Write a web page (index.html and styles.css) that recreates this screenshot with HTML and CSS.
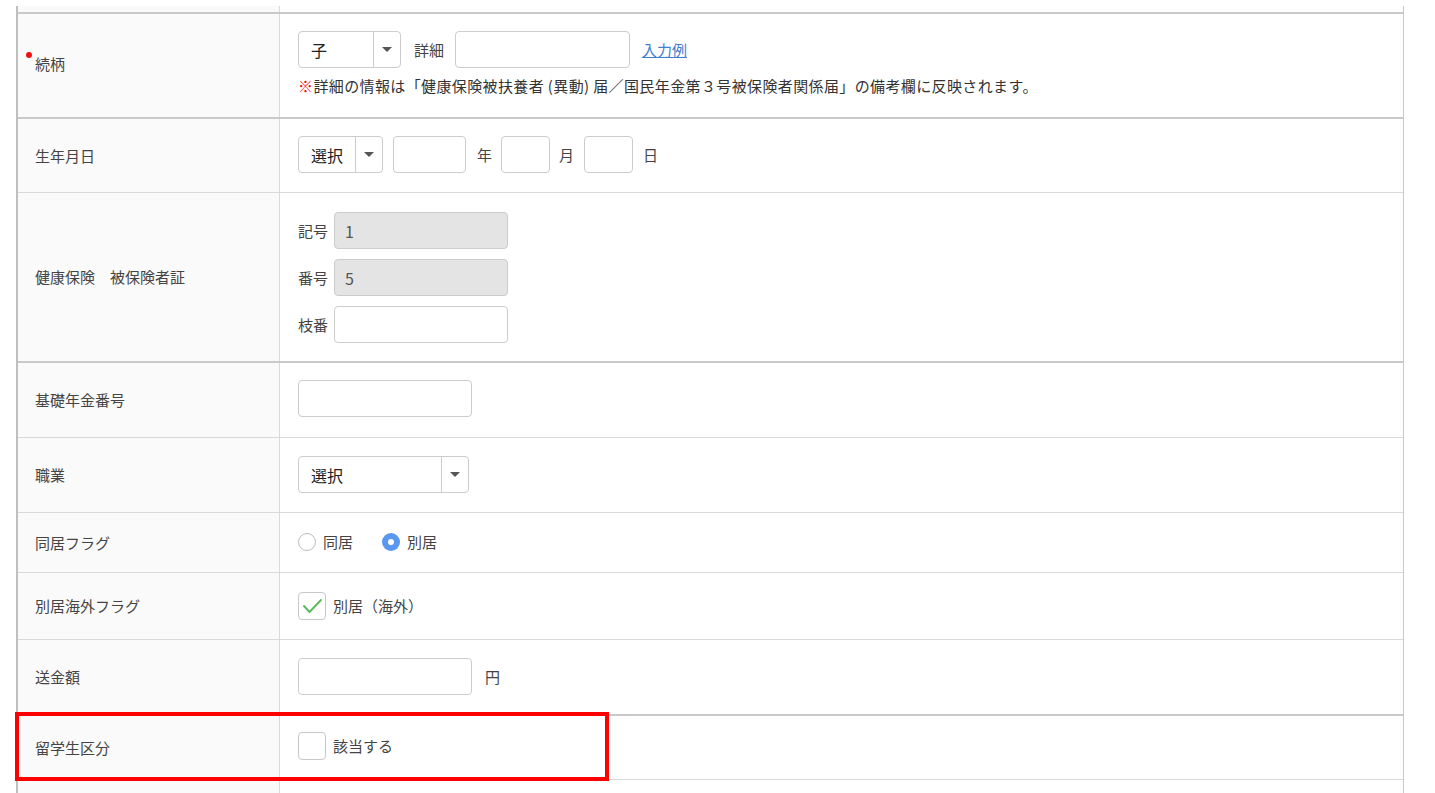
FILE: index.html
```html
<!DOCTYPE html>
<html lang="ja">
<head>
<meta charset="utf-8">
<title>扶養家族</title>
<link rel="stylesheet" href="styles.css">
</head>
<body>
<div class="sheet">
  <div class="row row-top thick">
    <div class="label"></div>
    <div class="value"></div>
  </div>

  <div class="row thick">
    <div class="label label-rel"><span class="req"></span>続柄</div>
    <div class="value v-relation">
      <div class="line">
        <div class="select w-rel"><span class="sel-text">子</span><span class="sel-btn"><span class="tri"></span></span></div>
        <span class="txt ml13">詳細</span>
        <div class="input w-detail ml11"></div>
        <a class="link ml12" href="#">入力例</a>
      </div>
      <div class="note"><span class="mark">※</span>詳細の情報は「健康保険被扶養者 (異動) 届／国民年金第３号被保険者関係届」の備考欄に反映されます。</div>
    </div>
  </div>

  <div class="row">
    <div class="label">生年月日</div>
    <div class="value v-birth">
      <div class="line">
        <div class="select w-era"><span class="sel-text">選択</span><span class="sel-btn"><span class="tri"></span></span></div>
        <div class="input w-year ml10"></div>
        <span class="txt ml11">年</span>
        <div class="input w-md ml9"></div>
        <span class="txt ml9">月</span>
        <div class="input w-md ml10"></div>
        <span class="txt ml10">日</span>
      </div>
    </div>
  </div>

  <div class="row thick">
    <div class="label">健康保険　被保険者証</div>
    <div class="value v-ins">
      <div class="stack">
        <div class="line"><span class="txt">記号</span><div class="input disabled w-ins ml6">1</div></div>
        <div class="line"><span class="txt">番号</span><div class="input disabled w-ins ml6">5</div></div>
        <div class="line"><span class="txt">枝番</span><div class="input w-ins ml6"></div></div>
      </div>
    </div>
  </div>

  <div class="row">
    <div class="label">基礎年金番号</div>
    <div class="value v-pension">
      <div class="input w-std"></div>
    </div>
  </div>

  <div class="row">
    <div class="label">職業</div>
    <div class="value v-job">
      <div class="select w-job"><span class="sel-text">選択</span><span class="sel-btn wide"><span class="tri"></span></span></div>
    </div>
  </div>

  <div class="row">
    <div class="label">同居フラグ</div>
    <div class="value v-cohabit">
      <div class="line">
        <span class="radio"></span><span class="txt ml7">同居</span>
        <span class="radio on ml29"></span><span class="txt ml7">別居</span>
      </div>
    </div>
  </div>

  <div class="row">
    <div class="label">別居海外フラグ</div>
    <div class="value v-abroad">
      <div class="line">
        <span class="check"><svg width="22" height="18" viewBox="0 0 22 18"><path d="M3 9 L8.5 15 L20 3" fill="none" stroke="#5cb85c" stroke-width="1.9" stroke-linecap="round" stroke-linejoin="round"/></svg></span>
        <span class="txt ml7">別居（海外）</span>
      </div>
    </div>
  </div>

  <div class="row thick">
    <div class="label">送金額</div>
    <div class="value v-remit">
      <div class="line">
        <div class="input w-std"></div>
        <span class="txt ml13">円</span>
      </div>
    </div>
  </div>

  <div class="row row-student">
    <div class="highlight"></div>
    <div class="label">留学生区分</div>
    <div class="value v-student">
      <div class="line">
        <span class="check"></span>
        <span class="txt ml7">該当する</span>
      </div>
    </div>
  </div>

  <div class="row row-last">
    <div class="label"></div>
    <div class="value"></div>
  </div>
</div>
</body>
</html>
```

FILE: styles.css
```css
html, body {
  margin: 0;
  padding: 0;
  background: #ffffff;
  font-family: "Noto Sans CJK JP", "Noto Sans", "Liberation Sans", sans-serif;
  font-size: 15px;
  color: #333333;
  overflow: hidden;
}

.sheet {
  margin: 6px 0 0 16px;
  width: 1388px;
  box-sizing: border-box;
  border-left: 2px solid #bfbfbf;
  border-right: 1px solid #c8c8c8;
  position: relative;
}

.row {
  display: grid;
  grid-template-columns: 262px 1fr;
  border-bottom: 1px solid #d9d9d9;
  position: relative;
}

.row.thick {
  border-bottom: 2px solid #c9c9c9;
}

.row-top {
  height: 6px;
}

.row-last {
  height: 30px;
}

.label {
  background: #fafafa;
  border-right: 1px solid #dadada;
  padding-left: 17px;
  display: flex;
  align-items: center;
  color: #444444;
  font-size: 15px;
  line-height: 20px;
  position: relative;
}

.label-rel {
  padding-bottom: 4px;
}

.req {
  position: absolute;
  left: 8px;
  top: 50%;
  margin-top: -14px;
  width: 6px;
  height: 6px;
  border-radius: 50%;
  background: #ee1111;
}

.value {
  padding: 0 18px;
  display: flex;
  flex-direction: column;
  justify-content: center;
  background: #ffffff;
}

.v-relation { padding-top: 17px; padding-bottom: 21px; }
.v-birth { padding-top: 17px; padding-bottom: 19px; }
.v-ins { padding-top: 19px; padding-bottom: 18px; }
.v-pension { padding-top: 17px; padding-bottom: 20px; }
.v-job { padding-top: 18px; padding-bottom: 19px; }
.v-cohabit { padding-top: 19px; padding-bottom: 20px; }
.v-abroad { padding-top: 19px; padding-bottom: 19px; }
.v-remit { padding-top: 18px; padding-bottom: 19px; }
.v-student { padding-top: 16px; padding-bottom: 19px; }

.line {
  display: flex;
  align-items: center;
}

.stack {
  display: flex;
  flex-direction: column;
  gap: 10px;
}

.txt {
  color: #444444;
  line-height: 20px;
  white-space: nowrap;
}

.ml6 { margin-left: 6px; }
.ml7 { margin-left: 7px; }
.ml9 { margin-left: 9px; }
.ml10 { margin-left: 10px; }
.ml11 { margin-left: 11px; }
.ml12 { margin-left: 12px; }
.ml13 { margin-left: 13px; }
.ml29 { margin-left: 29px; }

.input {
  height: 37px;
  box-sizing: border-box;
  border: 1px solid #cccccc;
  border-radius: 4px;
  background: #ffffff;
  display: flex;
  align-items: center;
  padding-left: 10px;
  color: #555555;
  font-size: 16px;
}

.input.disabled {
  background: #e4e4e4;
}

.w-detail { width: 175px; }
.w-year { width: 73px; }
.w-md { width: 49px; }
.w-ins { width: 174px; }
.w-std { width: 174px; }

.select {
  height: 37px;
  box-sizing: border-box;
  border: 1px solid #cccccc;
  border-radius: 4px;
  background: #ffffff;
  display: flex;
  align-items: stretch;
}

.w-rel { width: 103px; }
.w-era { width: 85px; }
.w-job { width: 171px; }

.sel-text {
  flex: 1;
  display: flex;
  align-items: center;
  padding-left: 12px;
  color: #222222;
  font-size: 16px;
}

.sel-btn {
  width: 26px;
  border-left: 1px solid #cccccc;
  display: flex;
  align-items: center;
  justify-content: center;
}

.sel-btn.wide {
  width: 26px;
}

.tri {
  width: 0;
  height: 0;
  border-left: 5px solid transparent;
  border-right: 5px solid transparent;
  border-top: 5px solid #555555;
}

.link {
  color: #3f7fd0;
  text-decoration: underline;
  line-height: 20px;
}

.note {
  margin-top: 8px;
  line-height: 20px;
  color: #333333;
  white-space: nowrap;
  letter-spacing: 0.38px;
}

.mark {
  color: #ee1111;
}

.radio {
  width: 18px;
  height: 18px;
  box-sizing: border-box;
  border: 1px solid #bdbdbd;
  border-radius: 50%;
  background: #ffffff;
  display: inline-block;
  position: relative;
}

.radio.on {
  border: none;
  background: #5a97ef;
}

.radio.on::after {
  content: "";
  position: absolute;
  left: 6px;
  top: 6px;
  width: 6px;
  height: 6px;
  border-radius: 50%;
  background: #ffffff;
}

.check {
  width: 28px;
  height: 28px;
  box-sizing: border-box;
  border: 1px solid #c8c8c8;
  border-radius: 4px;
  background: #ffffff;
  display: inline-flex;
  align-items: center;
  justify-content: center;
}

.highlight {
  position: absolute;
  left: -3px;
  top: -4px;
  width: 594px;
  height: 69px;
  box-sizing: border-box;
  border: 4px solid #ff0000;
  z-index: 2;
  pointer-events: none;
}
```
